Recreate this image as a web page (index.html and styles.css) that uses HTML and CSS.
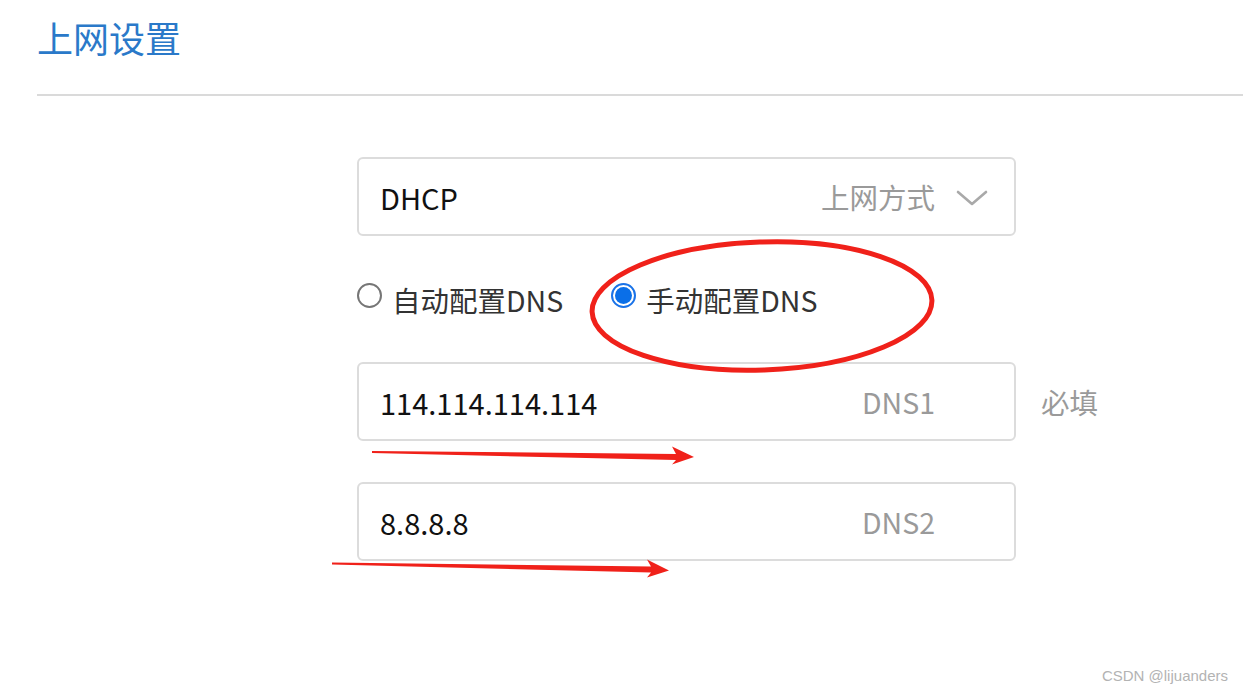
FILE: index.html
```html
<!DOCTYPE html>
<html lang="zh-CN">
<head>
<meta charset="utf-8">
<title>上网设置</title>
<link rel="stylesheet" href="styles.css">
</head>
<body>
<div class="page">
  <header class="header">
    <h1 class="title">上网设置</h1>
  </header>
  <main class="form">
    <div class="field">
      <span class="value">DHCP</span>
      <span class="hint">上网方式</span>
      <svg class="chevron" width="32" height="18" viewBox="0 0 32 18"><path d="M2 3 L16 15 L30 3" fill="none" stroke="#a9a9a9" stroke-width="2.6" stroke-linecap="round" stroke-linejoin="round"/></svg>
    </div>
    <div class="radios">
      <label class="radio"><span class="dot"></span><span class="rlabel">自动配置DNS</span></label>
      <label class="radio checked"><span class="dot"></span><span class="rlabel">手动配置DNS</span></label>
    </div>
    <div class="row">
      <div class="field">
        <span class="value">114.114.114.114</span>
        <span class="hint dns">DNS1</span>
      </div>
      <span class="required">必填</span>
    </div>
    <div class="row second">
      <div class="field">
        <span class="value">8.8.8.8</span>
        <span class="hint dns">DNS2</span>
      </div>
    </div>
  </main>
  <svg class="marks" width="1243" height="692" viewBox="0 0 1243 692">
    <ellipse cx="762" cy="306" rx="170" ry="64" transform="rotate(-2 762 306)" fill="none" stroke="#f0211a" stroke-width="5"/>
    <polygon points="372,451 676,454 672,446.5 694,457 672,464.5 676,460 372,453" fill="#f0211a"/>
    <polygon points="332,562.5 651,566.5 647,559.5 669,570.5 647,577.5 651,572.5 332,564.5" fill="#f0211a"/>
  </svg>
  <div class="watermark">CSDN @lijuanders</div>
</div>
</body>
</html>
```
FILE: styles.css
```css
html, body {
  margin: 0;
  padding: 0;
  background: #ffffff;
}
body {
  font-family: "Noto Sans CJK SC", "Noto Sans", sans-serif;
  width: 1243px;
  height: 692px;
  overflow: hidden;
}
.page {
  position: relative;
  width: 1243px;
  height: 692px;
}
.header {
  margin-left: 37px;
  height: 94px;
  border-bottom: 2px solid #dadada;
}
.title {
  margin: 0;
  padding-top: 14px;
  font-size: 36px;
  font-weight: 400;
  line-height: 46px;
  color: #2a79c9;
}
.form {
  margin-left: 357px;
  margin-top: 61px;
  width: 659px;
}
.row {
  display: flex;
  align-items: center;
}
.row.second {
  margin-top: 41px;
}
.field {
  box-sizing: border-box;
  width: 659px;
  height: 79px;
  border: 2px solid #dcdcdc;
  border-radius: 6px;
  display: flex;
  align-items: center;
  padding: 0 26px 0 21px;
  flex-shrink: 0;
}
.value {
  font-size: 29px;
  color: #111;
  flex: 1;
}
.hint {
  font-size: 28.5px;
  color: #9a9a9a;
}
.hint.dns {
  margin-right: 53px;
}
.chevron {
  margin-left: 21px;
  margin-top: 2px;
}
.required {
  margin-left: 25px;
  font-size: 28.5px;
  color: #9a9a9a;
  white-space: nowrap;
}
.radios {
  height: 126px;
  display: flex;
  align-items: center;
  gap: 48px;
}
.radio {
  display: flex;
  align-items: center;
  gap: 10px;
}
.dot {
  box-sizing: border-box;
  width: 25px;
  height: 25px;
  border-radius: 50%;
  border: 2px solid #767676;
  margin-top: -7px;
  background: #fff;
  position: relative;
}
.radio.checked .dot {
  border-color: #1a73e8;
}
.radio.checked .dot::after {
  content: "";
  position: absolute;
  left: 2px;
  top: 2px;
  width: 17px;
  height: 17px;
  border-radius: 50%;
  background: #0a6fe8;
}
.rlabel {
  font-size: 28.5px;
  color: #333;
}
.marks {
  position: absolute;
  left: 0;
  top: 0;
  pointer-events: none;
}
.watermark {
  position: absolute;
  right: 15px;
  bottom: 8px;
  font-family: "Liberation Sans", Arial, sans-serif;
  font-size: 15px;
  color: #b3b3b3;
}
```
